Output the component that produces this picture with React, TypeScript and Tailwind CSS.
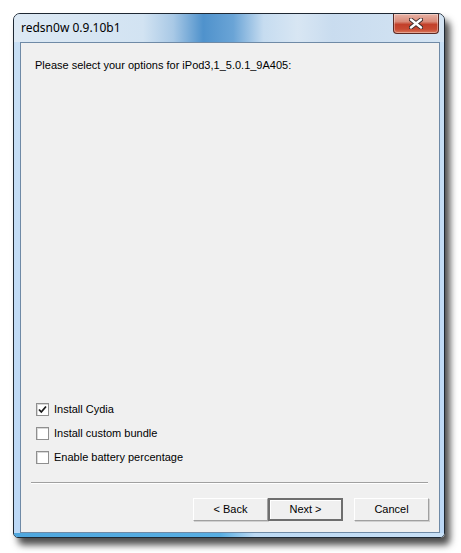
import { useState } from 'react';

const uiFont = { fontFamily: 'Tahoma, "Liberation Sans", "DejaVu Sans", sans-serif' };
const titleFont = { fontFamily: '"Segoe UI", "Noto Sans", "Open Sans", sans-serif' };

function CloseButton() {
    return (
        <div className="absolute right-[5px] top-0 h-[20px] w-[46px] rounded-b-[4px] border border-t-0 border-[#5b2a24] bg-[linear-gradient(to_bottom,#e8b3a6_0%,#d98a78_40%,#c2402a_55%,#c84a32_80%,#d9785c_100%)] flex items-center justify-center shadow-[inset_0_0_0_1px_rgba(255,255,255,0.35)]">
            <svg width="14" height="11" viewBox="0 0 14 11">
                <path d="M2 1.5 L12 9.5 M12 1.5 L2 9.5" stroke="#3a2a2a" strokeWidth="4.2" strokeLinecap="round" />
                <path d="M2 1.5 L12 9.5 M12 1.5 L2 9.5" stroke="#ffffff" strokeWidth="2.4" strokeLinecap="round" />
            </svg>
        </div>
    );
}

function Checkbox({ checked, label }: { checked: boolean; label: string }) {
    return (
        <div className="flex h-[24px] items-center">
            <div className="ml-[15px] flex h-[13px] w-[13px] items-center justify-center border border-[#8f8f8f] bg-white shadow-[inset_1px_1px_0_#d8d8d8]">
                {checked && (
                    <svg width="9" height="9" viewBox="0 0 9 9">
                        <path d="M1 4.5 L3.3 7 L8 1.5" stroke="#1a1a1a" strokeWidth="1.8" fill="none" />
                    </svg>
                )}
            </div>
            <span className="ml-[5px] text-[11px] text-black">{label}</span>
        </div>
    );
}

function Button({ label, isDefault }: { label: string; isDefault?: boolean }) {
    return (
        <button
            className={
                'h-[23px] w-[75px] text-[11px] text-black bg-[#f0f0f0] ' +
                (isDefault
                    ? 'border-2 border-[#6e6e6e] shadow-[inset_1px_1px_0_#ffffff]'
                    : 'border border-t-[#ffffff] border-l-[#ffffff] border-r-[#a0a0a0] border-b-[#a0a0a0] shadow-[1px_1px_0_#d0d0d0]')
            }
        >
            {label}
        </button>
    );
}

export default function App() {
    const [opts] = useState([
        { label: 'Install Cydia', checked: true },
        { label: 'Install custom bundle', checked: false },
        { label: 'Enable battery percentage', checked: false },
    ]);

    return (
        <div className="h-[553px] w-[461px] bg-white pl-[13px] pt-[13px]" style={uiFont}>
            <div className="relative flex h-[525px] w-[432px] flex-col rounded-t-[7px] rounded-b-[5px] border border-[#1e2833] bg-[linear-gradient(to_bottom,#c8dff4_0%,#bcd8f6_100%)] shadow-[5px_7px_7px_rgba(0,0,0,0.7)]">
                {/* title bar */}
                <div className="relative h-[28px] shrink-0 rounded-t-[6px] bg-[linear-gradient(to_right,#dde9f4_0%,#d2e3f2_30%,#a9c9e6_37%,#4f92cc_44%,#6aa4d6_51%,#c6dcf0_58%,#d8e6f3_66%,#c9dcef_74%,#d4e4f3_100%)]">
                    <span className="absolute left-[7px] top-[6px] text-[12px] leading-[16px] text-black" style={titleFont}>
                        redsn0w 0.9.10b1
                    </span>
                    <CloseButton />
                </div>
                {/* client area */}
                <div className="ml-[6px] mr-[4px] flex flex-1 flex-col border border-[#6f8aa6] bg-[#f0f0f0]">
                    <div className="flex flex-1 flex-col">
                        <p className="ml-[14px] mt-[15px] text-[11px] leading-[14px] text-black">
                            Please select your options for iPod3,1_5.0.1_9A405:
                        </p>
                        <div className="flex-1" />
                        <div className="flex flex-col">
                            {opts.map((o) => (
                                <Checkbox key={o.label} checked={o.checked} label={o.label} />
                            ))}
                        </div>
                        <div className="ml-[10px] mr-[11px] mt-[13px] h-[2px] border-t border-b border-t-[#a0a0a0] border-b-white" />
                        <div className="mb-[11px] mr-[10px] mt-[14px] flex justify-end">
                            <Button label="< Back" />
                            <Button label="Next >" isDefault />
                            <div className="w-[11px]" />
                            <Button label="Cancel" />
                        </div>
                    </div>
                </div>
                {/* bottom frame */}
                <div className="h-[4px] shrink-0 rounded-b-[4px] bg-[linear-gradient(to_right,#4fa7de_0%,#58aee2_48%,#bcd9f3_56%,#c8e0f6_100%)]" />
            </div>
        </div>
    );
}
